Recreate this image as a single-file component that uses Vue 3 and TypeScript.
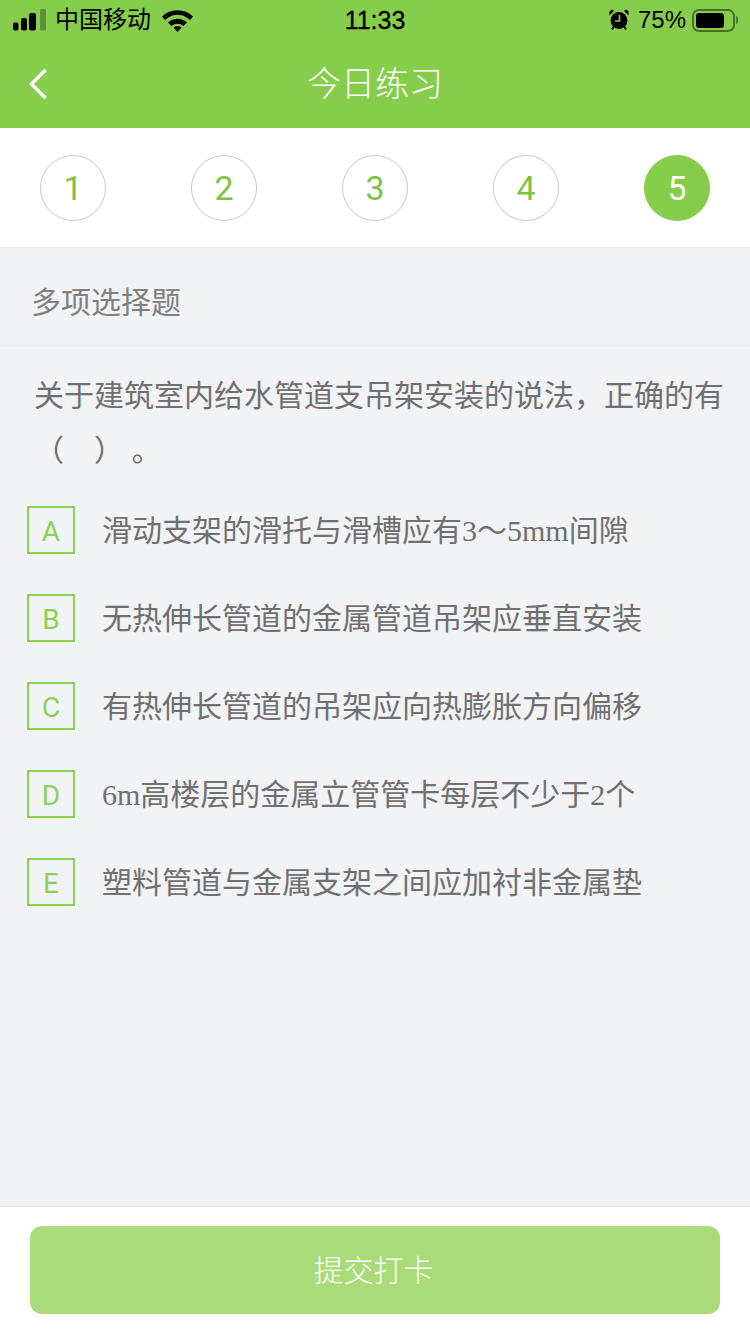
<script setup lang="ts">
const steps = [1, 2, 3, 4, 5];
const activeStep = 5;

const options = [
  { key: "A", text: "滑动支架的滑托与滑槽应有3～5mm间隙" },
  { key: "B", text: "无热伸长管道的金属管道吊架应垂直安装" },
  { key: "C", text: "有热伸长管道的吊架应向热膨胀方向偏移" },
  { key: "D", text: "6m高楼层的金属立管管卡每层不少于2个" },
  { key: "E", text: "塑料管道与金属支架之间应加衬非金属垫" },
];
</script>

<template>
  <div class="page">
    <header class="header">
      <div class="status-bar">
        <div class="status-left">
          <svg class="signal" width="33" height="22" viewBox="0 0 33 22">
            <rect x="0" y="13.5" width="5.5" height="8" rx="2" fill="#000" />
            <rect x="8" y="9" width="6" height="12.5" rx="2" fill="#000" />
            <rect x="16" y="4" width="7" height="17.5" rx="2" fill="#000" />
            <rect x="27" y="0" width="6" height="21.5" rx="1.5" fill="#000" opacity="0.3" />
          </svg>
          <span class="carrier">中国移动</span>
          <svg class="wifi" width="31" height="23" viewBox="0 0 31 23">
            <path d="M0 7.5C8.5 -1 22.5 -1 31 7.5L28 11C20.5 4 10.5 4 3 11Z" fill="#000" />
            <path d="M6 13.5C11.5 8.5 19.5 8.5 25 13.5L21.5 17C18 14 13 14 9.5 17Z" fill="#000" />
            <path d="M11.5 18.5C13.5 16.8 17.5 16.8 19.5 18.5L15.5 23Z" fill="#000" />
          </svg>
        </div>
        <span class="clock">11:33</span>
        <div class="status-right">
          <svg class="alarm" width="20" height="21" viewBox="0 0 20 21">
            <circle cx="10" cy="11.5" r="8.4" fill="#000" />
            <path d="M10.5 6v6H6" fill="none" stroke="#86cd4b" stroke-width="1.6" />
            <path d="M.5 6.500 5 1.800 3 .6 .5 2.600Z M19.500 6.500 15 1.800 17 .6 19.500 2.600Z" fill="#000" />
            <path d="M4.500 18 3 20.500M15.500 18 17 20.500" stroke="#000" stroke-width="1.8" />
          </svg>
          <span class="battery-text">75%</span>
          <div class="battery">
            <div class="battery-fill"></div>
          </div>
          <div class="battery-cap"></div>
        </div>
      </div>
      <div class="nav-bar">
        <svg class="back" width="20" height="32" viewBox="0 0 20 32">
          <path d="M17.5 2 3.5 16l14 14" fill="none" stroke="#fff" stroke-width="3.4" />
        </svg>
        <h1 class="title">今日练习</h1>
      </div>
    </header>

    <nav class="steps">
      <div
        v-for="step in steps"
        :key="step"
        :class="['step', { active: step === activeStep }]"
      >
        {{ step }}
      </div>
    </nav>

    <main class="content">
      <div class="type">多项选择题</div>
      <p class="question">关于建筑室内给水管道支吊架安装的说法，正确的有（　）&nbsp;。</p>
      <ul class="options">
        <li v-for="option in options" :key="option.key" class="option">
          <span class="option-key">{{ option.key }}</span>
          <span class="option-text">{{ option.text }}</span>
        </li>
      </ul>
    </main>

    <footer class="footer">
      <button class="submit" type="button">提交打卡</button>
    </footer>
  </div>
</template>

<style>
html,
body {
  margin: 0;
  background: #f2f3f5;
}
</style>

<style scoped>
.page {
  display: flex;
  flex-direction: column;
  width: 750px;
  height: 1334px;
  overflow: hidden;
  background: #f2f3f5;
  font-family: "Liberation Serif", "Noto Sans CJK SC", serif;
}

.header {
  height: 128px;
  background: #86cd4b;
}

.status-bar {
  display: flex;
  align-items: center;
  justify-content: space-between;
  position: relative;
  height: 40px;
  padding: 0 12px 0 13px;
  color: #000;
  font-family: "Liberation Sans", "Noto Sans CJK SC", sans-serif;
}

.status-left,
.status-right {
  display: flex;
  align-items: center;
}

.carrier {
  margin-left: 9px;
  font-size: 24px;
  line-height: 40px;
}

.wifi {
  margin-left: 11px;
}

.clock {
  position: absolute;
  left: 0;
  right: 0;
  text-align: center;
  font-size: 25px;
  -webkit-text-stroke: 0.3px #000;
}

.alarm {
  margin-top: -2px;
}

.battery-text {
  margin-left: 9px;
  font-size: 24px;
}

.battery {
  box-sizing: border-box;
  width: 43px;
  height: 23px;
  margin-left: 6px;
  padding: 2px;
  border: 2px solid rgba(0, 0, 0, 0.45);
  border-radius: 7px;
}

.battery-fill {
  width: 28px;
  height: 100%;
  border-radius: 3px;
  background: #000;
}

.battery-cap {
  width: 2px;
  height: 8px;
  margin-left: 1px;
  border-radius: 0 2px 2px 0;
  background: rgba(0, 0, 0, 0.4);
}

.nav-bar {
  display: flex;
  align-items: center;
  justify-content: center;
  position: relative;
  height: 88px;
}

.back {
  position: absolute;
  left: 28px;
  top: 28px;
}

.title {
  margin: 0;
  color: #fff;
  font-family: "Noto Sans CJK SC", sans-serif;
  font-size: 34px;
  font-weight: 300;
  line-height: 84px;
  padding-bottom: 4px;
}

.steps {
  display: flex;
  align-items: center;
  justify-content: space-between;
  box-sizing: border-box;
  height: 120px;
  padding: 0 40px;
  background: #fff;
  border-bottom: 1px solid #e8e8e8;
}

.step {
  display: flex;
  align-items: center;
  justify-content: center;
  box-sizing: border-box;
  width: 66px;
  height: 66px;
  border: 1px solid #c8c8c8;
  border-radius: 50%;
  color: #7cc443;
  font-family: Roboto, "Liberation Sans", sans-serif;
  font-size: 34px;
}

.step.active {
  border-color: #86cd4b;
  background: #86cd4b;
  color: #fff;
}

.content {
  flex: 1;
}

.type {
  box-sizing: border-box;
  height: 98px;
  padding-left: 31px;
  border-bottom: 1px solid #e9eaec;
  color: #808080;
  font-size: 30px;
  line-height: 110px;
}

.question {
  margin: 0;
  padding: 22px 24px 0 34px;
  color: #707070;
  font-size: 30px;
  line-height: 55px;
}

.options {
  margin: 28px 0 0;
  padding: 0 0 0 27px;
  list-style: none;
}

.option {
  display: flex;
  align-items: center;
  height: 48px;
  margin-bottom: 40px;
}

.option-key {
  display: flex;
  align-items: center;
  justify-content: center;
  box-sizing: border-box;
  width: 48px;
  height: 48px;
  padding-top: 2px;
  border: 2px solid #8ad155;
  color: #8ad155;
  font-family: Roboto, "Liberation Sans", sans-serif;
  font-size: 28px;
}

.option-text {
  margin-left: 27px;
  padding-bottom: 5px;
  color: #707070;
  font-size: 30px;
}

.footer {
  display: flex;
  justify-content: center;
  box-sizing: border-box;
  height: 128px;
  padding-top: 19px;
  background: #fff;
  border-top: 1px solid #e8e8e8;
}

.submit {
  width: 690px;
  height: 88px;
  padding: 0 3px 5px 0;
  border: none;
  border-radius: 12px;
  background: #a9dc79;
  color: #fff;
  font-family: "Noto Sans CJK SC", sans-serif;
  font-size: 30px;
  font-weight: 300;
}
</style>
